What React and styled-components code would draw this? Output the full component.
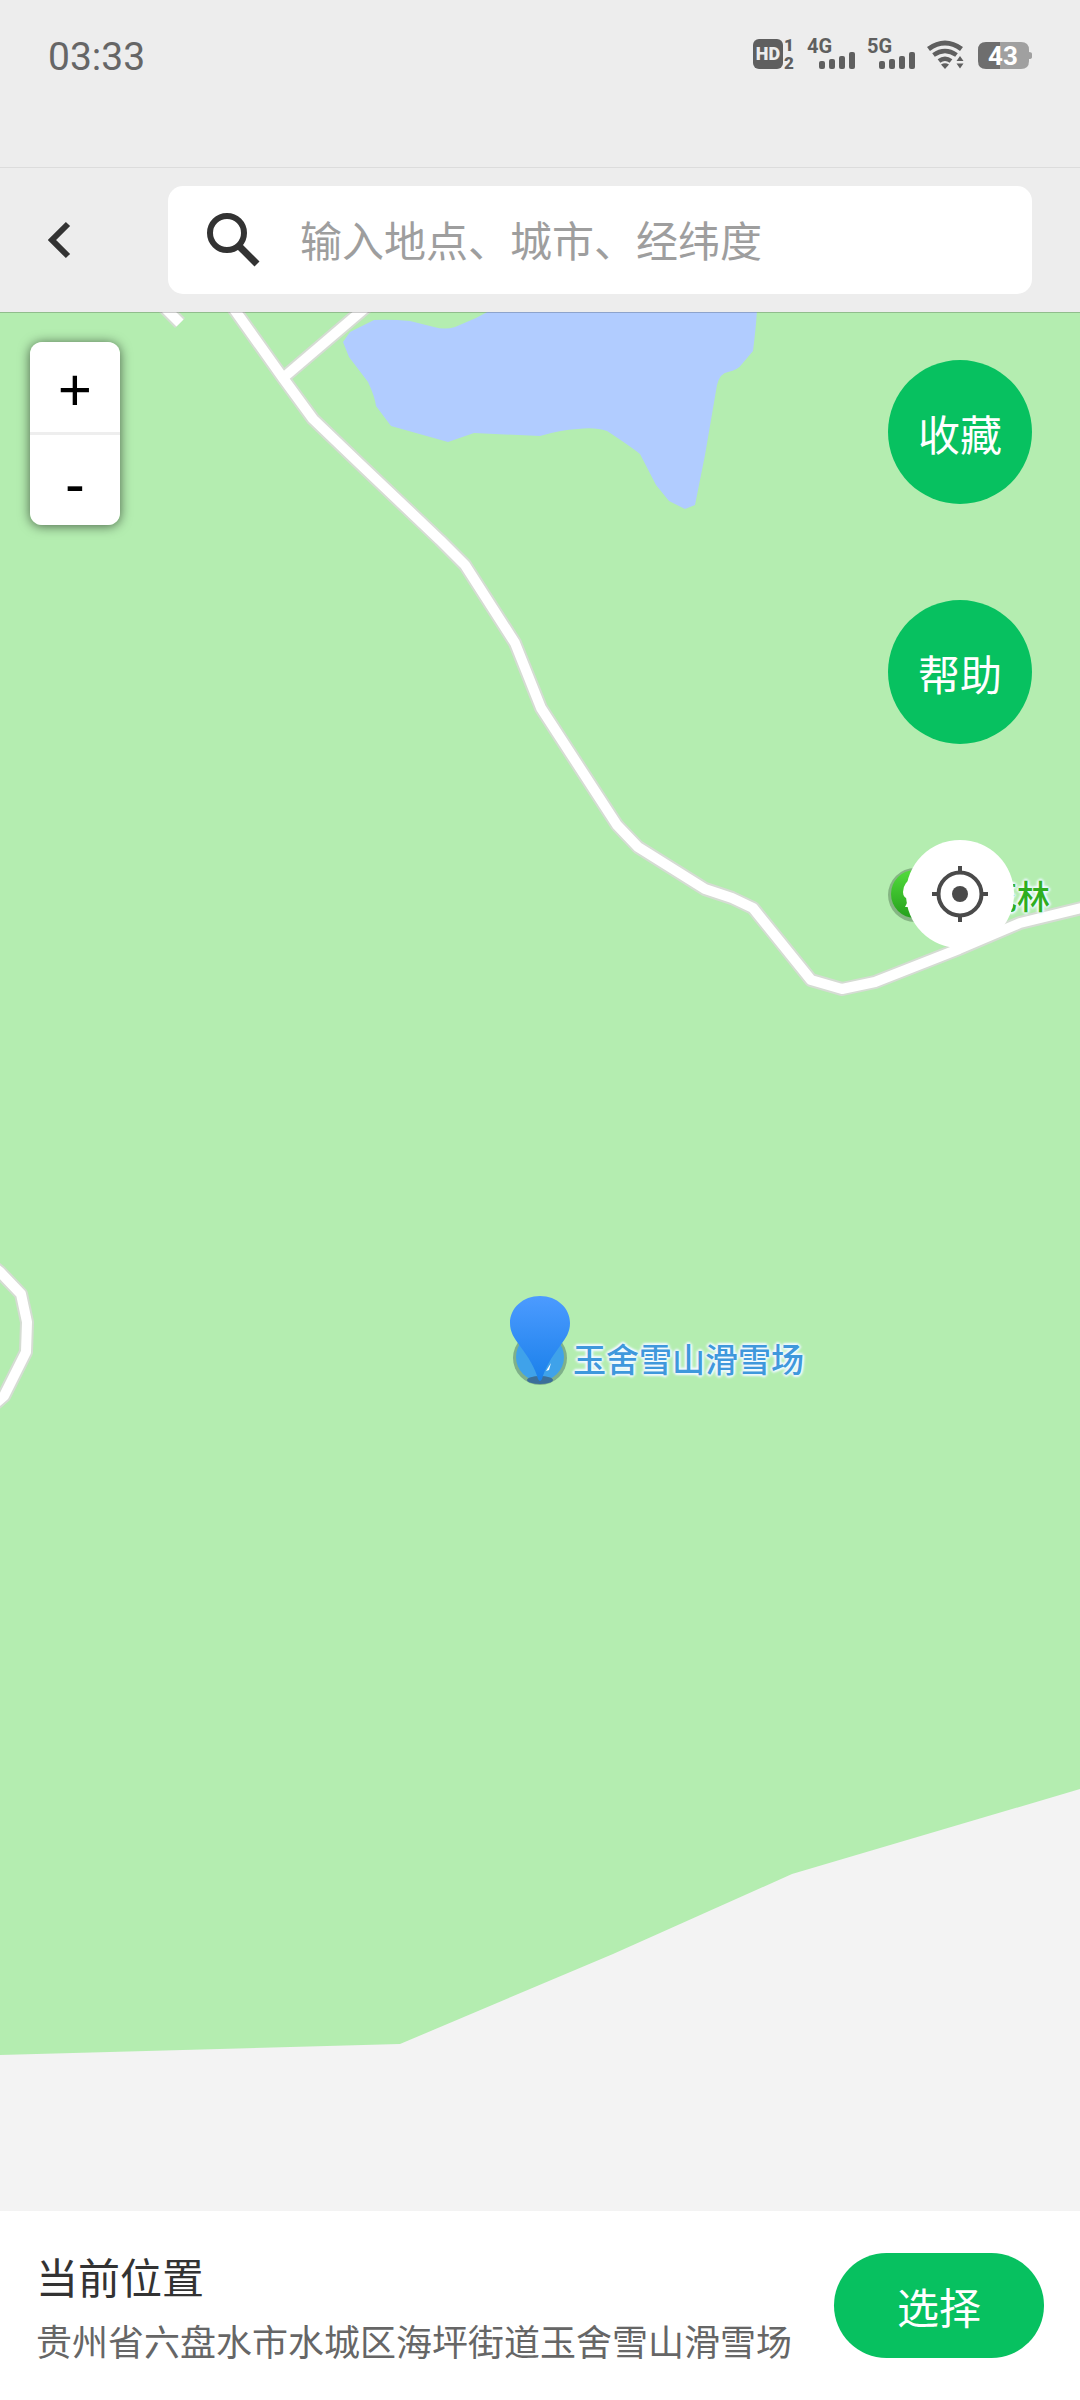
import {useState} from 'react'
import styled, {createGlobalStyle} from 'styled-components'

const GlobalStyle = createGlobalStyle`
  * {
    box-sizing: border-box;
  }

  body {
    margin: 0;
    font-family: Roboto, 'Noto Sans CJK SC', sans-serif;
  }

  button,
  input {
    margin: 0;
    padding: 0;
    border: none;
    outline: none;
    font-family: inherit;
  }

  button {
    cursor: pointer;
  }

  svg {
    display: block;
  }
`

const Page = styled.div`
  min-height: 100vh;
  display: flex;
  flex-direction: column;
  background-color: #ededed;
`

const StatusBar = styled.div`
  height: 168px;
  padding: 33px 48px 0;
  display: flex;
  align-items: flex-start;
  justify-content: space-between;
  border-bottom: 1px solid #dcdcdc;
`

const Clock = styled.span`
  font-size: 39px;
  line-height: 48px;
  color: #666666;
`

const StatusIcons = styled.div`
  display: flex;
  gap: 12px;
`

const Header = styled.header`
  padding: 18px 48px;
  display: flex;
  align-items: center;
  gap: 96px;
`

const BackButton = styled.button`
  width: 24px;
  height: 48px;
  background: none;
`

const SearchBox = styled.label`
  flex: 1;
  height: 108px;
  padding: 0 36px;
  display: flex;
  align-items: center;
  gap: 36px;
  border-radius: 15px;
  background-color: #ffffff;
`

const SearchInput = styled.input`
  flex: 1;
  min-width: 0;
  height: 66px;
  padding-top: 4px;
  font-size: 42px;
  color: #333333;
  background: none;

  &::placeholder {
    color: #9e9e9e;
    opacity: 1;
  }
`

const MapArea = styled.main`
  position: relative;
  flex: 1;
  min-height: 900px;
  padding: 30px 48px 0 30px;
  display: flex;
  align-items: flex-start;
  justify-content: space-between;
  overflow: hidden;
  background-color: #b4edb0;

  &::before {
    content: '';
    position: absolute;
    z-index: 1;
    top: 0;
    left: 0;
    right: 0;
    height: 1px;
    background-color: rgba(0, 0, 0, 0.2);
  }
`

const MapCanvas = styled.svg`
  position: absolute;
  top: 0;
  left: 0;
  width: 100%;
  height: 100%;
`

const Poi = styled.div`
  position: absolute;
  top: ${(props) => props.$y}px;
  left: calc(50% + ${(props) => props.$x}px);
  display: flex;
  align-items: center;
  gap: ${(props) => props.$gap}px;
  font-family: 'Noto Sans CJK SC', sans-serif;
  font-size: 33px;
  font-weight: 500;
  line-height: 54px;
  white-space: nowrap;
  color: ${(props) => props.$color};
  text-shadow: 0 0 4px #ffffff, 2px 0 2px #e6f6ff, -2px 0 2px #e6f6ff, 0 2px 2px #e6f6ff, 0 -2px 2px #e6f6ff;
`

const CenterPin = styled.svg`
  position: absolute;
  top: 984px;
  left: calc(50% - 30px);
`

const ZoomControl = styled.div`
  position: relative;
  width: 90px;
  display: flex;
  flex-direction: column;
  border-radius: 12px;
  box-shadow: 0 1px 12px rgba(0, 0, 0, 0.6);
`

const ZoomButton = styled.button`
  height: 90px;
  padding-top: 4px;
  font-family: 'Noto Sans', sans-serif;
  font-size: 60px;
  line-height: 86px;
  color: #000000;
  background-color: #ffffff;

  &:first-child {
    height: 93px;
    border-bottom: 3px solid #eeeeee;
    border-radius: 12px 12px 0 0;
  }

  &:last-child {
    border-radius: 0 0 12px 12px;
  }
`

const MapActions = styled.div`
  position: relative;
  padding-top: 18px;
  display: flex;
  flex-direction: column;
  align-items: center;
  gap: 96px;
`

const RoundButton = styled.button`
  width: 144px;
  height: 144px;
  border-radius: 50%;
  font-size: 42px;
  color: #ffffff;
  background-color: #07c160;
`

const LocateButton = styled.button`
  width: 108px;
  height: 108px;
  display: flex;
  align-items: center;
  justify-content: center;
  border-radius: 50%;
  background-color: #ffffff;
`

const PlaceBar = styled.footer`
  min-height: 189px;
  padding: 24px 36px;
  display: flex;
  align-items: center;
  justify-content: space-between;
  gap: 36px;
  background-color: #ffffff;
`

const PlaceText = styled.div`
  min-width: 0;
  padding-top: 12px;
`

const PlaceTitle = styled.h1`
  margin: 0;
  font-size: 42px;
  font-weight: 400;
  line-height: 64px;
  color: #333333;
`

const PlaceAddress = styled.p`
  margin: 0;
  font-size: 36px;
  line-height: 64px;
  color: #666666;
`

const SelectButton = styled.button`
  flex-shrink: 0;
  width: 210px;
  height: 105px;
  border-radius: 53px;
  font-size: 42px;
  color: #ffffff;
  background-color: #07c160;
`

const MAIN_ROAD =
  'M229 -10 L283 66 L313 107 L360 152 L440 228 L465 253 L515 331 L541 396 L617 513 L638 535 L705 577 L732 586 L753 596 L811 668 L842 677 L875 670 L959 637 L1020 611 L1090 594'
const SIDE_ROAD = 'M283 66 L372 -10'
const STUB_ROAD = 'M159 -10 L180 11'
const LOOP_ROAD = 'M-10 952 L0 960 L21 982 L27 1010 L26 1040 L4 1084 L-10 1096'
const ROADS = [MAIN_ROAD, SIDE_ROAD, STUB_ROAD, LOOP_ROAD]

const LAKE =
  'M491 -2 L476 6 L455 15 Q445 18 434 15 L410 9 Q390 7 374 8 L350 20 L343 30 L349 45 L368 70 Q375 85 376 94 L391 114 L448 130 L474 121 L540 124 Q560 118 578 117 Q595 115 607 119 Q630 134 640 142 L656 173 L669 189 L685 197 L695 193 L705 143 L717 73 Q720 61 728 60 Q738 58 742 52 L753 39 Q756 15 757 -2 Z'

const SIGNAL_BARS = [
  {x: 12, y: 22, height: 8},
  {x: 22, y: 20, height: 10},
  {x: 32, y: 17, height: 13},
  {x: 42, y: 13, height: 17},
]

function HdIcon() {
  return (
    <svg width="42" height="42" viewBox="0 -6 42 42" fontFamily="Roboto" fontWeight="900">
      <rect width="30" height="30" rx="6" fill="#5f5f5f" />
      <text x="15" y="21" fontSize="18" textAnchor="middle" fill="#ededed">
        HD
      </text>
      <text x="36" y="12" fontSize="17" textAnchor="middle" fill="#5f5f5f">
        1
      </text>
      <text x="36" y="30" fontSize="17" textAnchor="middle" fill="#5f5f5f">
        2
      </text>
    </svg>
  )
}

function SignalIcon({network}) {
  return (
    <svg width="48" height="42" viewBox="0 -6 48 42" fill="#5f5f5f">
      <text x="0" y="14" fontFamily="Roboto" fontSize="20" fontWeight="700">
        {network}
      </text>
      {SIGNAL_BARS.map((bar) => (
        <rect key={bar.x} x={bar.x} y={bar.y} width="6" height={bar.height} rx="2" />
      ))}
    </svg>
  )
}

function WifiIcon() {
  return (
    <svg width="39" height="42" viewBox="0 -6 39 42" fill="none" stroke="#5f5f5f">
      <path d="M1.5 10 Q18 -2 34.500 10" strokeWidth="5" />
      <path d="M6.500 16 Q18 8 29.500 16" strokeWidth="4.5" />
      <path d="M12 22 Q18 17.500 24 22" strokeWidth="4.5" />
      <path d="M14 25.500 Q18 23 22 25.500 L18 30 Z" fill="#5f5f5f" stroke="none" />
      <path d="M29.500 22 L33 17 L36.500 22 Z M29.500 24.500 L33 29.500 L36.500 24.500 Z" fill="#5f5f5f" stroke="none" />
    </svg>
  )
}

function BatteryIcon() {
  return (
    <svg width="54" height="42" viewBox="0 -6 54 42">
      <path d="M8 3 H22 V30 H8 Q0 30 0 22 V11 Q0 3 8 3 Z" fill="#6e6e6e" />
      <path d="M22 3 H43 Q51 3 51 11 V22 Q51 30 43 30 H22 Z" fill="#a0a0a0" />
      <path d="M51 13 Q54 13 54 15 V18 Q54 20 51 20 Z" fill="#a0a0a0" />
      <text x="25" y="26" fontFamily="Roboto" fontSize="26" fontWeight="700" textAnchor="middle" fill="#ffffff">
        43
      </text>
    </svg>
  )
}

function SearchIcon() {
  return (
    <svg width="60" height="60" viewBox="0 0 60 60" fill="none" stroke="#333333" strokeWidth="6">
      <circle cx="23" cy="23" r="17" />
      <path d="M36 37 L53 54" strokeWidth="7" />
    </svg>
  )
}

function LocateIcon() {
  return (
    <svg width="56" height="56" viewBox="0 0 56 56" fill="none" stroke="#4a4a4a" strokeWidth="4">
      <circle cx="28" cy="28" r="21.500" />
      <circle cx="28" cy="28" r="8" fill="#4a4a4a" stroke="none" />
      <path d="M28 0 V7 M28 49 V56 M0 28 H7 M49 28 H56" />
    </svg>
  )
}

function MapDrawing() {
  return (
    <MapCanvas viewBox="0 0 1080 1899" preserveAspectRatio="xMidYMin slice" aria-hidden="true">
      <path d="M0 1743 L400 1732 L613 1642 L792 1562 L1080 1477 V1899 H0 Z" fill="#f3f3f3" />
      <path d={LAKE} fill="#b1ccff" />
      <g fill="none" stroke="#d5dcd3" strokeWidth="14" strokeLinejoin="round">
        {ROADS.map((road) => (
          <path key={road} d={road} />
        ))}
      </g>
      <g fill="none" stroke="#ffffff" strokeWidth="10" strokeLinejoin="round">
        {ROADS.map((road) => (
          <path key={road} d={road} />
        ))}
      </g>
    </MapCanvas>
  )
}

function ResortIcon() {
  return (
    <svg width="54" height="54" viewBox="0 0 54 54">
      <circle cx="27" cy="27" r="27" fill="#7fb08a" />
      <circle cx="27" cy="26" r="24" fill="#3fa2ea" />
      <path d="M12 19 Q18 23 19 32 Z M38 32 L33 40 L36 39 Z" fill="#ffffff" />
      <ellipse cx="27" cy="49" rx="13" ry="4" fill="#3b6f9a" />
    </svg>
  )
}

function ForestIcon() {
  return (
    <svg width="54" height="54" viewBox="0 0 54 54">
      <defs>
        <linearGradient id="forest" x1="0" y1="0" x2="0" y2="1">
          <stop offset="0" stopColor="#52dc3c" />
          <stop offset="1" stopColor="#25a01c" />
        </linearGradient>
      </defs>
      <circle cx="27" cy="27" r="27" fill="#85b583" />
      <circle cx="27" cy="26" r="24" fill="url(#forest)" />
      <path d="M27 8 Q15 14 15 24 Q15 30 21 31 L17 39 H37 L33 31 Q39 26 27 8 Z" fill="#ffffff" />
    </svg>
  )
}

export default function App() {
  const [keyword, setKeyword] = useState('')

  return (
    <Page>
      <GlobalStyle />
      <StatusBar>
        <Clock>03:33</Clock>
        <StatusIcons>
          <HdIcon />
          <SignalIcon network={'4G'} />
          <SignalIcon network={'5G'} />
          <WifiIcon />
          <BatteryIcon />
        </StatusIcons>
      </StatusBar>

      <Header>
        <BackButton type={'button'} aria-label={'返回'}>
          <svg width="24" height="48" viewBox="0 0 24 48" fill="none" stroke="#333333" strokeWidth="6">
            <path d="M20 8 L4 24 L20 40" />
          </svg>
        </BackButton>
        <SearchBox>
          <SearchIcon />
          <SearchInput
            type={'text'}
            placeholder={'输入地点、城市、经纬度'}
            value={keyword}
            onChange={(e) => setKeyword(e.target.value)}
          />
        </SearchBox>
      </Header>

      <MapArea>
        <MapDrawing />
        <Poi $x={348} $y={556} $gap={42} $color={'#2fae1f'}>
          <ForestIcon />
          <span>花林</span>
        </Poi>
        <Poi $x={-27} $y={1019} $gap={6} $color={'#3f98dc'}>
          <ResortIcon />
          <span>玉舍雪山滑雪场</span>
        </Poi>
        <CenterPin width="60" height="90" viewBox="0 0 60 90" aria-hidden="true">
          <defs>
            <linearGradient id="pin" x1="0" y1="0" x2="0" y2="1">
              <stop offset="0" stopColor="#4c9bff" />
              <stop offset="1" stopColor="#1a80ea" />
            </linearGradient>
          </defs>
          <path
            d="M30 0 C13 0 0 12 0 27 C0 36 4 42 10 50 C19 62 25 72 28 83 Q30 87 32 83 C35 72 41 62 50 50 C56 42 60 36 60 27 C60 12 47 0 30 0 Z"
            fill="url(#pin)"
          />
        </CenterPin>
        <ZoomControl>
          <ZoomButton type={'button'}>+</ZoomButton>
          <ZoomButton type={'button'}>-</ZoomButton>
        </ZoomControl>
        <MapActions>
          <RoundButton type={'button'}>收藏</RoundButton>
          <RoundButton type={'button'}>帮助</RoundButton>
          <LocateButton type={'button'} aria-label={'定位'}>
            <LocateIcon />
          </LocateButton>
        </MapActions>
      </MapArea>

      <PlaceBar>
        <PlaceText>
          <PlaceTitle>当前位置</PlaceTitle>
          <PlaceAddress>贵州省六盘水市水城区海坪街道玉舍雪山滑雪场</PlaceAddress>
        </PlaceText>
        <SelectButton type={'button'}>选择</SelectButton>
      </PlaceBar>
    </Page>
  )
}
